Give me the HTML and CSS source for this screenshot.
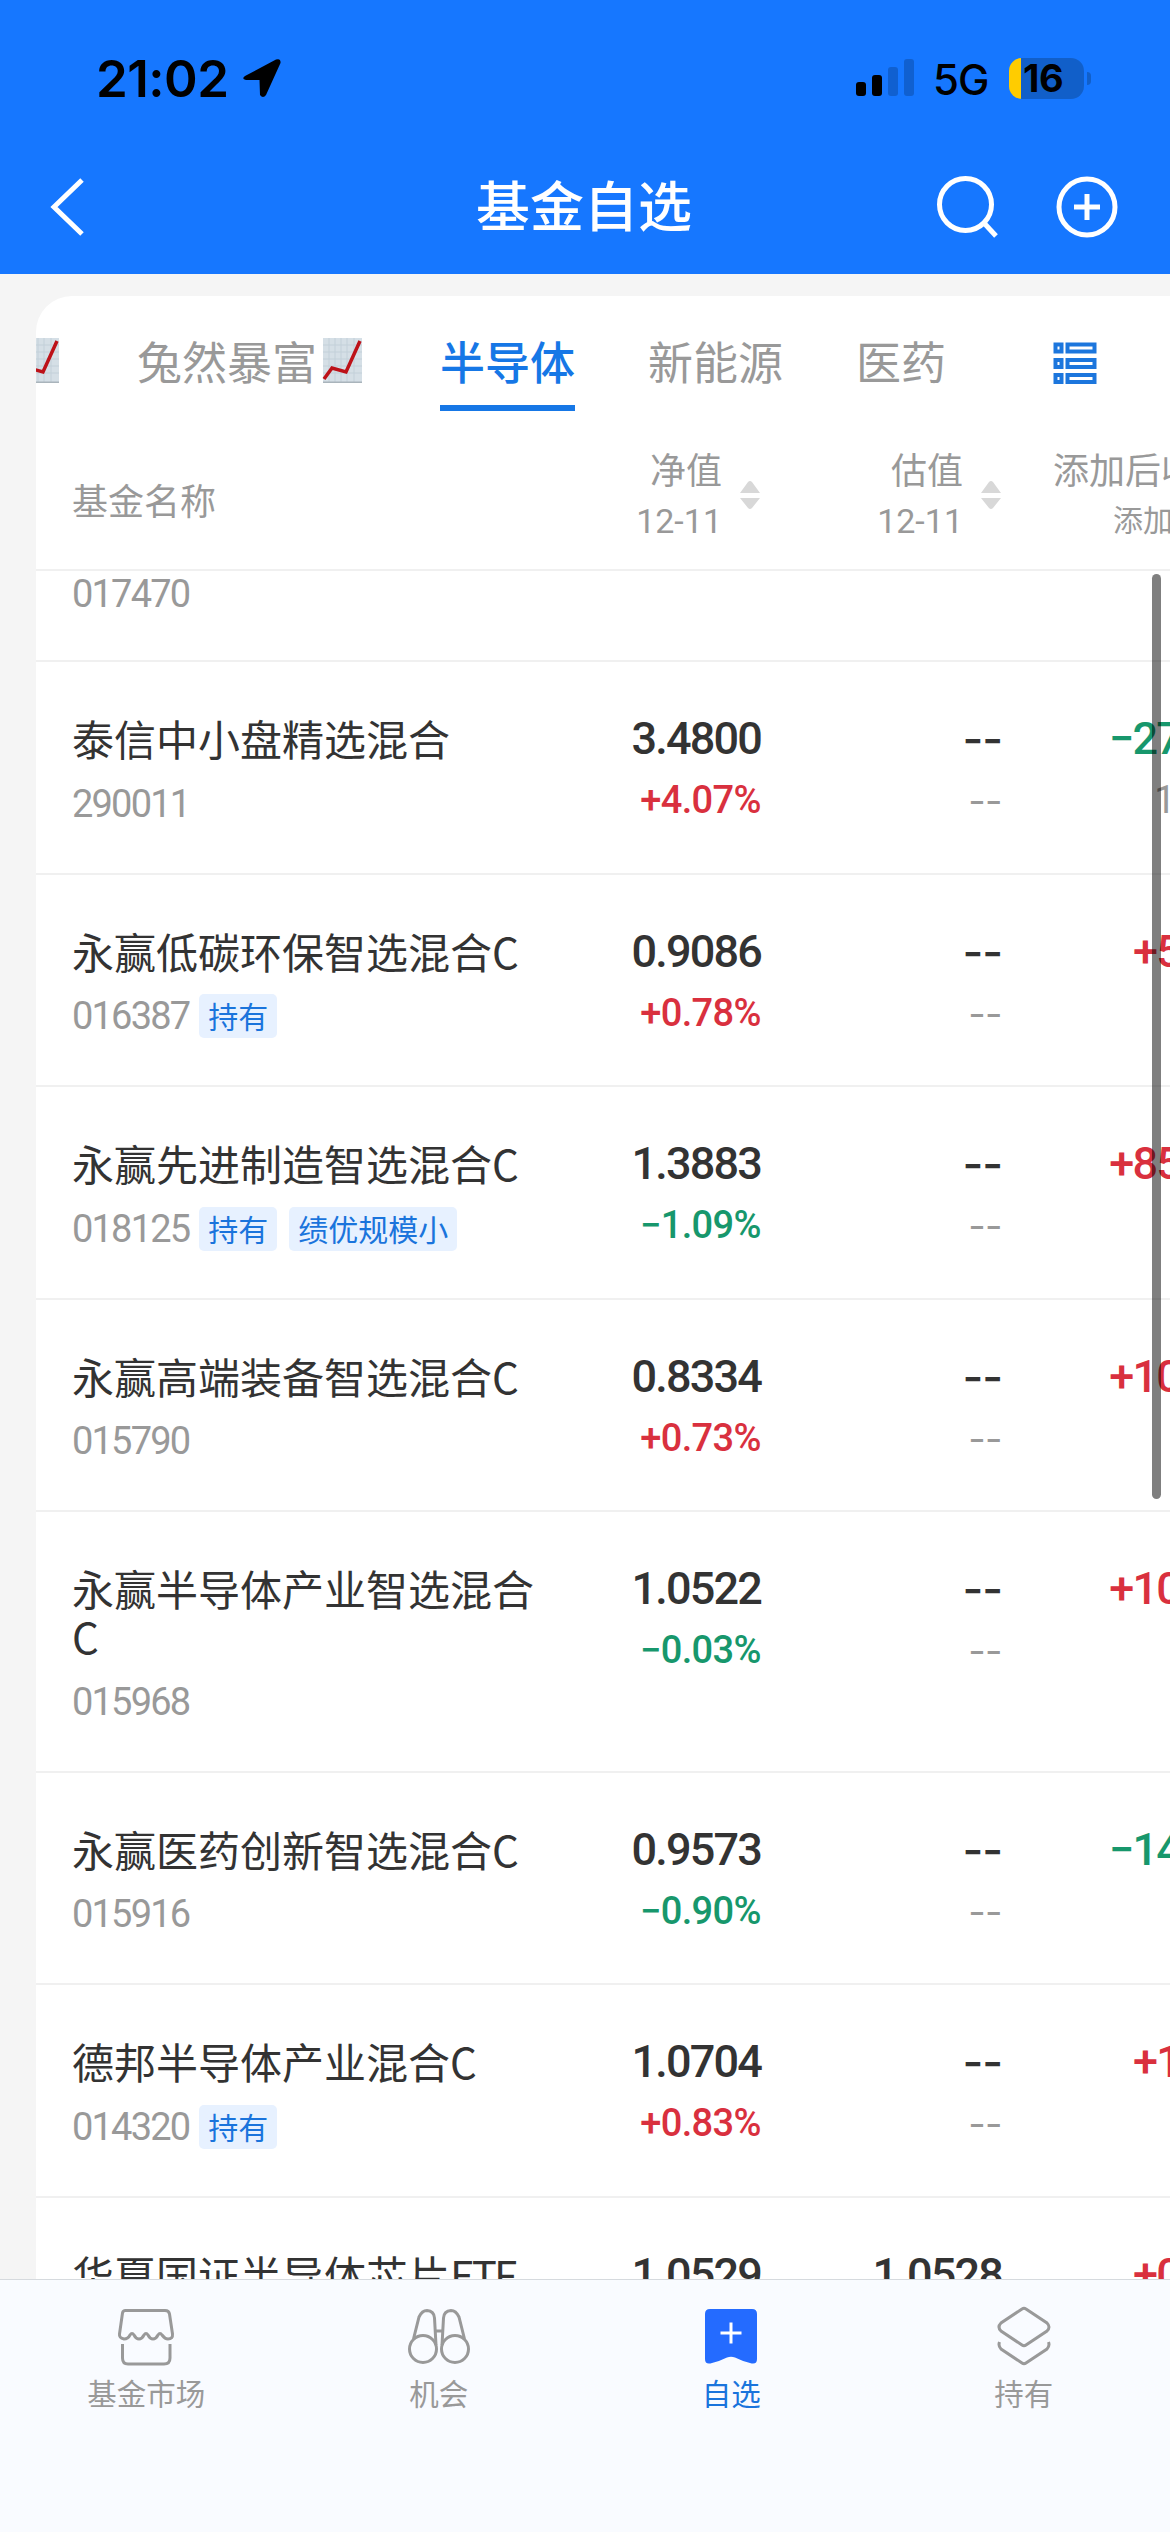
FILE: index.html
```html
<!DOCTYPE html>
<html lang="zh-CN">
<head>
    <meta charset="UTF-8">
    <meta name="viewport" content="width=device-width, initial-scale=1.0">
    <title>基金自选</title>
    <link rel="stylesheet" href="styles.css">
</head>
<body>

    <header class="header">
        <div class="status-bar">
            <div class="status-left">
                <span class="time">21:02</span>
                <svg class="location" width="40" height="40" viewBox="0 0 40 40">
                    <path d="M3 18 L34 1.5 Q39 0 38.500 5 L24 37 Q21 41 18 37 L17.500 22 L4 22 Q-1 21 3 18Z"/>
                </svg>
            </div>
            <div class="status-right">
                <svg width="58" height="38" viewBox="0 0 58 38">
                    <rect x="0" y="23" width="10" height="14" rx="3"/>
                    <rect x="16" y="16" width="10" height="21" rx="3"/>
                    <rect x="32" y="8" width="10" height="29" rx="3" fill="#1060d0"/>
                    <rect x="48" y="0" width="10" height="37" rx="3" fill="#1060d0"/>
                </svg>
                <span class="network">5G</span>
                <div class="battery"><span>16</span></div>
            </div>
        </div>
        <div class="nav-bar">
            <svg class="back" width="36" height="60" viewBox="0 0 36 60">
                <path d="M32 3 L4 30 L32 57"/>
            </svg>
            <h1>基金自选</h1>
            <div class="nav-actions">
                <svg width="62" height="64" viewBox="0 0 62 64">
                    <circle cx="29.500" cy="29.500" r="26"/>
                    <path d="M48 48 L60 61"/>
                </svg>
                <svg width="62" height="64" viewBox="0 0 62 64">
                    <circle cx="31" cy="32" r="28"/>
                    <path d="M18 32 H44 M31 19 V45"/>
                </svg>
            </div>
        </div>
    </header>

    <main class="main">
        <div class="card">
            <nav class="tabs">
                <span class="tab tab-first">
                    <svg class="chart" width="45" height="45" viewBox="0 0 45 45"><use href="#chart"/></svg>
                </span>
                <span class="tab">兔然暴富<svg class="chart" width="45" height="45" viewBox="0 0 45 45">
                    <g id="chart">
                        <rect x="5" width="39" height="45" fill="#d5dfe6"/>
                        <path d="M11 0V45 M17 0V45 M23 0V45 M29 0V45 M36 0V45 M5 7H44 M5 14H44 M5 21H44 M5 28H44 M5 35H44" stroke="#c3d0d9" stroke-width="1"/>
                        <path d="M5 44.500H44" stroke="#a9b4bb" stroke-width="2"/>
                        <path d="M6 41 L14 30 L28 34 L42 3" fill="none" stroke="#bd1219" stroke-width="3.500"/>
                    </g>
                </svg></span>
                <span class="tab active">半导体</span>
                <span class="tab">新能源</span>
                <span class="tab">医药</span>
                <svg class="list-icon" width="44" height="44" viewBox="0 0 44 44">
                    <rect x="2.500" y="2.500" width="6" height="7"/>
                    <rect x="14.500" y="2.500" width="27" height="7"/>
                    <rect x="2.500" y="18" width="6" height="7"/>
                    <rect x="14.500" y="18" width="27" height="7"/>
                    <rect x="2.500" y="33" width="6" height="7"/>
                    <rect x="14.500" y="33" width="27" height="7"/>
                </svg>
            </nav>

            <div class="table-head">
                <div class="head-name">基金名称</div>
                <div class="head-cell">
                    <div>净值<small>12-11</small></div>
                    <svg width="22" height="30" viewBox="0 0 22 30"><path d="M9 2 Q11 0 13 2 L21 13 H1Z M1 18 H21 L13 28 Q11 30 9 28Z"/></svg>
                </div>
                <div class="head-cell">
                    <div>估值<small>12-11</small></div>
                    <svg width="22" height="30" viewBox="0 0 22 30"><path d="M9 2 Q11 0 13 2 L21 13 H1Z M1 18 H21 L13 28 Q11 30 9 28Z"/></svg>
                </div>
                <div class="head-last">添加后收<small>添加</small></div>
            </div>

            <div class="row row-cut">
                <div>
                    <div class="code">017470</div>
                </div>
            </div>

            <div class="row">
                <div>
                    <div class="name">泰信中小盘精选混合</div>
                    <div class="code">290011</div>
                </div>
                <div class="num">3.4800<span class="rate up">+4.07%</span></div>
                <div class="num dash">--<span class="rate">--</span></div>
                <div class="num gain down">−27<span class="rate days">1</span></div>
            </div>

            <div class="row">
                <div>
                    <div class="name">永赢低碳环保智选混合C</div>
                    <div class="code">016387<span class="tag">持有</span></div>
                </div>
                <div class="num">0.9086<span class="rate up">+0.78%</span></div>
                <div class="num dash">--<span class="rate">--</span></div>
                <div class="num gain up">+5</div>
            </div>

            <div class="row">
                <div>
                    <div class="name">永赢先进制造智选混合C</div>
                    <div class="code">018125<span class="tag">持有</span><span class="tag">绩优规模小</span></div>
                </div>
                <div class="num">1.3883<span class="rate down">−1.09%</span></div>
                <div class="num dash">--<span class="rate">--</span></div>
                <div class="num gain up">+85</div>
            </div>

            <div class="row">
                <div>
                    <div class="name">永赢高端装备智选混合C</div>
                    <div class="code">015790</div>
                </div>
                <div class="num">0.8334<span class="rate up">+0.73%</span></div>
                <div class="num dash">--<span class="rate">--</span></div>
                <div class="num gain up">+10</div>
            </div>

            <div class="row">
                <div>
                    <div class="name">永赢半导体产业智选混合C</div>
                    <div class="code">015968</div>
                </div>
                <div class="num">1.0522<span class="rate down">−0.03%</span></div>
                <div class="num dash">--<span class="rate">--</span></div>
                <div class="num gain up">+10</div>
            </div>

            <div class="row">
                <div>
                    <div class="name">永赢医药创新智选混合C</div>
                    <div class="code">015916</div>
                </div>
                <div class="num">0.9573<span class="rate down">−0.90%</span></div>
                <div class="num dash">--<span class="rate">--</span></div>
                <div class="num gain down">−14</div>
            </div>

            <div class="row">
                <div>
                    <div class="name">德邦半导体产业混合C</div>
                    <div class="code">014320<span class="tag">持有</span></div>
                </div>
                <div class="num">1.0704<span class="rate up">+0.83%</span></div>
                <div class="num dash">--<span class="rate">--</span></div>
                <div class="num gain up">+1</div>
            </div>

            <div class="row">
                <div>
                    <div class="name">华夏国证半导体芯片<span class="latin">ETF</span></div>
                </div>
                <div class="num">1.0529</div>
                <div class="num">1.0528</div>
                <div class="num gain up">+0</div>
            </div>
        </div>
        <div class="scrollbar"></div>
    </main>

    <footer class="tab-bar">
        <div class="bar-item">
            <svg width="60" height="60" viewBox="0 0 60 60">
                <path d="M9.500 4.500 H49 Q53 4.500 53.500 8 L56.500 28 Q57 33 52 33 Q49 33 46 29 Q44 26 42 29 Q40 33 37 33 Q34 33 32 29 Q30 26 28 29 Q26 33 23 33 Q20 33 18 29 Q16 26 14 29 Q12 33 8 33 Q3 32 3.500 28 L6.500 7 Q7 4.500 9.500 4.500Z"/>
                <path d="M6.500 38 V52 Q6.500 58 12 58 H48 Q54 58 54 52 V38"/>
            </svg>
            <span>基金市场</span>
        </div>
        <div class="bar-item">
            <svg width="62" height="60" viewBox="0 0 62 60">
                <circle cx="15" cy="43" r="13.500"/>
                <circle cx="47" cy="43" r="13.500"/>
                <path d="M5.500 33 L11 11 Q14 4.500 19 4.500 Q26 5 26.500 12 L28 39 M56.500 33 L51 11 Q48 4.500 43 4.500 Q36 5 35.500 12 L34 39 M27.500 25 H34.500"/>
            </svg>
            <span>机会</span>
        </div>
        <div class="bar-item current">
            <svg width="60" height="60" viewBox="0 0 60 60">
                <path class="mark" d="M9 3 H51 Q56 3 56 8 V53 Q56 59 49 57 Q41 55 34 51.500 Q30 50 26 51.500 Q19 55 11 57 Q4 59 4 53 V8 Q4 3 9 3Z"/>
                <path class="plus" d="M19.500 27 H40.500 M30 16.500 V37.500"/>
            </svg>
            <span>自选</span>
        </div>
        <div class="bar-item">
            <svg width="60" height="60" viewBox="0 0 60 60">
                <path d="M28 3 Q30 1.500 32 3 L53 17 Q57 21 53 25 L32 39 Q30 40.500 28 39 L7 25 Q3 21 7 17Z"/>
                <path d="M5.500 36 Q4 40 7 43 L28 57 Q30 58.500 32 57 L53 43 Q56 40 54.500 36"/>
            </svg>
            <span>持有</span>
        </div>
    </footer>

</body>
</html>
```
FILE: styles.css
```css
* {
    box-sizing: border-box;
}

body {
    margin: 0;
    width: 1170px;
    height: 2532px;
    overflow: hidden;
    display: flex;
    flex-direction: column;
    background-color: #f5f5f5;
    color: #333;
    font-family: "Noto Sans CJK SC", sans-serif;
}

svg {
    display: block;
    flex: none;
}

/* header */
.header {
    height: 274px;
    background-color: #1677ff;
}

.status-bar {
    height: 156px;
    padding: 0 86px 0 96px;
    display: flex;
    justify-content: space-between;
    align-items: center;
    font-family: Inter, sans-serif;
    color: #000;
}

.status-left,
.status-right {
    display: flex;
    align-items: center;
}

.time {
    font-size: 51px;
    font-weight: 600;
    letter-spacing: -0.5px;
    width: 146px;
}

.network {
    font-size: 42px;
    font-weight: 500;
    letter-spacing: -1px;
    margin: 2px 0 0 19px;
    width: 76px;
}

.battery {
    position: relative;
    width: 75px;
    height: 41px;
    border-radius: 13px;
    background: linear-gradient(to right, #ffcc00 12px, #115fc9 12px);
    font-size: 38px;
    font-weight: 700;
    line-height: 40px;
    padding-left: 14px;
    letter-spacing: -0.5px;
}

.battery::after {
    content: "";
    position: absolute;
    left: 78px;
    top: 14px;
    width: 4px;
    height: 13px;
    border-radius: 0 4px 4px 0;
    background-color: #115fc9;
}

.nav-bar {
    height: 102px;
    padding: 0 52px 0 50px;
    display: grid;
    grid-template-columns: 1fr auto 1fr;
    align-items: center;
}

.nav-bar svg {
    fill: none;
    stroke: #fff;
    stroke-width: 5;
}

.nav-bar h1 {
    margin: 0 0 6px;
    font-size: 54px;
    font-weight: 500;
    line-height: 80px;
    color: #fff;
}

.nav-actions {
    display: flex;
    justify-content: flex-end;
    gap: 58px;
}

/* fund list */
.main {
    position: relative;
    flex: 1;
    min-height: 0;
    overflow: hidden;
    padding: 22px 0 0 36px;
}

.card {
    width: 1134px;
    background-color: #fff;
    border-top-left-radius: 36px;
    overflow: hidden;
}

.tabs {
    display: flex;
    gap: 73px;
    height: 115px;
    white-space: nowrap;
}

.tab {
    display: flex;
    align-items: center;
    height: 115px;
    font-size: 45px;
    line-height: 60px;
    color: #999;
    padding-top: 20px;
    border-bottom: 6px solid transparent;
}

.tab .chart {
    margin: 0 4px 0 1px;
}

.tab-first {
    margin-left: -22px;
}

.tab.active {
    color: #1677e6;
    font-weight: 500;
    border-color: #1677e6;
}

.list-icon {
    margin: 46px 0 0 34px;
    fill: none;
    stroke: #1c76dd;
    stroke-width: 4;
}

.table-head,
.row {
    display: grid;
    grid-template-columns: 470px 219px 241px 178px;
    padding-left: 36px;
    border-bottom: 2px solid #f0f0f0;
}

.table-head {
    height: 160px;
    padding-top: 32px;
    font-size: 36px;
    line-height: 51px;
    color: #999;
}

.table-head small {
    display: block;
    font-family: Roboto, "Noto Sans CJK SC", sans-serif;
    font-size: 34px;
    letter-spacing: 0;
    line-height: 54px;
}

.head-name {
    padding-top: 31px;
}

.head-cell {
    display: flex;
    justify-content: flex-end;
    gap: 17px;
    text-align: right;
}

.head-cell svg {
    margin-top: 37px;
    fill: #d8d8d8;
}

.head-last {
    padding-left: 51px;
    white-space: nowrap;
}

.table-head .head-last small {
    font-size: 30px;
    margin-left: 60px;
}

.row {
    padding-top: 52px;
    padding-bottom: 46.5px;
}

.row-cut {
    padding-top: 0;
    padding-bottom: 44px;
}

.name {
    font-size: 42px;
    line-height: 48px;
    margin-bottom: 19px;
}

.latin {
    letter-spacing: -3px;
}

.code {
    display: flex;
    align-items: center;
    height: 45px;
    font-family: Roboto, sans-serif;
    font-size: 38px;
    letter-spacing: -1.8px;
    color: #999;
}

.tag {
    height: 44px;
    margin-left: 10px;
    padding: 0 9px;
    border-radius: 5px;
    background-color: #e7f1ff;
    color: #1a74dc;
    font-family: "Noto Sans CJK SC", sans-serif;
    font-size: 30px;
    line-height: 42px;
    letter-spacing: 0;
}

.tag + .tag {
    margin-left: 12px;
}

.num {
    padding-top: 2px;
    font-family: Roboto, sans-serif;
    font-size: 45px;
    font-weight: 500;
    line-height: 46px;
    letter-spacing: -1.8px;
    text-align: right;
}

.rate {
    display: block;
    margin-top: 15px;
    font-size: 38px;
    letter-spacing: -0.6px;
}

.dash {
    font-family: Inter, sans-serif;
    letter-spacing: -1px;
}

.dash .rate {
    color: #999;
    font-weight: 400;
}

.num .days {
    margin-right: 5px;
    color: #999;
    font-weight: 400;
}

.up {
    color: #d9303e;
}

.down {
    color: #17976c;
}

.scrollbar {
    position: absolute;
    top: 300px;
    right: 9px;
    width: 9px;
    height: 925px;
    border-radius: 5px;
    background-color: rgba(0, 0, 0, 0.5);
}

/* bottom bar */
.tab-bar {
    height: 253px;
    display: flex;
    border-top: 1px solid #d6dade;
    background-color: #f9fbff;
}

.bar-item {
    flex: 1;
    display: flex;
    flex-direction: column;
    align-items: center;
    padding-top: 26px;
    font-size: 29.5px;
    line-height: 52px;
    color: #999;
}

.bar-item svg {
    fill: none;
    stroke: #999;
    stroke-width: 3;
}

.bar-item .mark {
    fill: #246bff;
    stroke: none;
}

.bar-item .plus {
    stroke: #fff;
}

.current {
    color: #1a74dc;
}
```
